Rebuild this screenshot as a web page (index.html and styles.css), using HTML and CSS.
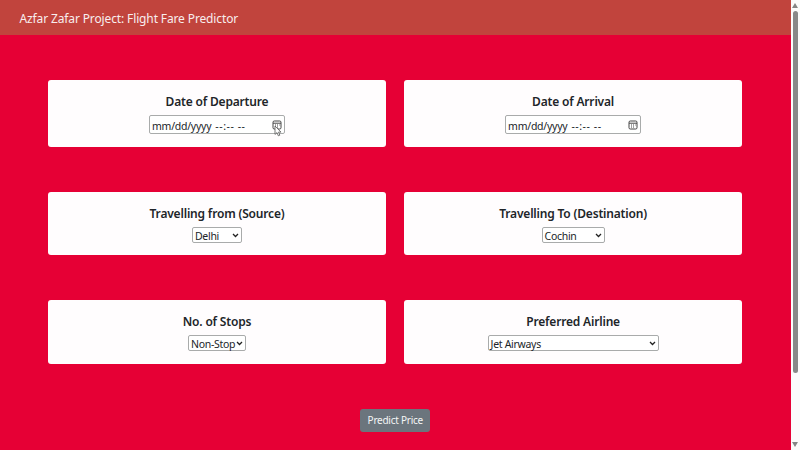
FILE: index.html
```html
<!DOCTYPE html>
<html lang="en">
<head>
<meta charset="utf-8">
<title>Flight Fare Predictor</title>
<link rel="stylesheet" href="styles.css">
</head>
<body>
<div class="page">
  <nav class="navbar"><span class="brand">Azfar Zafar Project: Flight Fare Predictor</span></nav>
  <main class="form">
    <section class="card">
      <h5>Date of Departure</h5>
      <div class="control date"><span class="date-text">mm/dd/yyyy</span><span class="time-text">--:-- --</span>
        <svg class="calendar" viewBox="0 0 10 10"><rect x="1" y="1" width="8" height="8" rx="1.3"/><path d="M1 3.2h8M3 5h1M5 5h1M7 5h.6M3 7h1M5 7h1"/></svg>
        <svg class="cursor" viewBox="0 0 8 12"><path d="M1 1v8.4l2-1.8 1.3 3.2 1.5-.6-1.3-3.1H7z"/></svg>
      </div>
    </section>
    <section class="card">
      <h5>Date of Arrival</h5>
      <div class="control date"><span class="date-text">mm/dd/yyyy</span><span class="time-text">--:-- --</span>
        <svg class="calendar" viewBox="0 0 10 10"><rect x="1" y="1" width="8" height="8" rx="1.3"/><path d="M1 3.2h8M3 5h1M5 5h1M7 5h.6M3 7h1M5 7h1"/></svg>
      </div>
    </section>
    <section class="card">
      <h5>Travelling from (Source)</h5>
      <div class="control select source"><span>Delhi</span><svg class="chevron" viewBox="0 0 7 5"><path d="M1 1l2.5 2.5L6 1"/></svg></div>
    </section>
    <section class="card">
      <h5>Travelling To (Destination)</h5>
      <div class="control select destination"><span>Cochin</span><svg class="chevron" viewBox="0 0 7 5"><path d="M1 1l2.5 2.5L6 1"/></svg></div>
    </section>
    <section class="card">
      <h5>No. of Stops</h5>
      <div class="control select stops"><span>Non-Stop</span><svg class="chevron" viewBox="0 0 7 5"><path d="M1 1l2.5 2.5L6 1"/></svg></div>
    </section>
    <section class="card">
      <h5>Preferred Airline</h5>
      <div class="control select airline"><span>Jet Airways</span><svg class="chevron" viewBox="0 0 7 5"><path d="M1 1l2.5 2.5L6 1"/></svg></div>
    </section>
  </main>
  <button class="submit">Predict Price</button>
</div>
<aside class="scrollbar">
  <svg class="arrow" viewBox="0 0 6 5"><path d="M3 0l3 5H0z"/></svg>
  <div class="thumb"></div>
  <svg class="arrow down" viewBox="0 0 6 5"><path d="M0 0h6L3 5z"/></svg>
</aside>
</body>
</html>
```
FILE: styles.css
```css
* { box-sizing: border-box; }
body {
  margin: 0;
  height: 450px;
  display: flex;
  overflow: hidden;
  background: #e60035;
  color: #212529;
  font: 10.5px "Noto Sans", "Open Sans", sans-serif;
}
.page { flex: 1; display: flex; flex-direction: column; align-items: center; }
.navbar {
  width: 100%;
  height: 35px;
  padding: 0 19.5px;
  background: #c1443d;
  display: flex;
  align-items: center;
}
.brand { color: #f8eeee; font-size: 12px; line-height: 16px; padding-top: 2px; white-space: nowrap; letter-spacing: -0.13px; }
.form {
  width: 694px;
  margin-top: 45px;
  display: grid;
  grid-template-columns: 337.5px 337.5px;
  grid-template-rows: 67px 63.3px 63.3px;
  column-gap: 18.6px;
  row-gap: 45px;
}
.card {
  background: #fffdfe;
  border-radius: 3px;
  padding-top: 14px;
  display: flex;
  flex-direction: column;
  align-items: center;
}
h5 {
  margin: 0 0 5px;
  height: 16px;
  font-size: 12px;
  line-height: 16px;
  font-weight: 600;
  letter-spacing: -0.18px;
  white-space: nowrap;
}
.control {
  position: relative;
  display: flex;
  align-items: center;
  height: 16px;
  padding: 0 2px;
  border: 1px solid #a9abab;
  border-radius: 2px;
  background: #fff;
  white-space: nowrap;
  letter-spacing: -0.3px;
}
.date { width: 136px; height: 19px; }
.date span { padding-top: 2px; }
.date-text { letter-spacing: -0.25px; }
.time-text { margin-left: 4px; letter-spacing: 0.55px; }
.calendar { width: 10px; height: 10px; margin-left: auto; fill: none; stroke: #444; stroke-width: 1; }
.cursor { position: absolute; left: 124px; top: 9px; width: 8px; height: 12px; fill: #fff; stroke: #555; stroke-width: 0.8; }
.select { justify-content: space-between; }
.select span { padding-top: 2px; }
.source { width: 50px; }
.destination { width: 63px; }
.stops { width: 58px; }
.airline { width: 171px; }
.chevron { flex: none; width: 7px; height: 5px; fill: none; stroke: #222; stroke-width: 1.3; }
.submit {
  width: 70px;
  height: 23px;
  margin-top: 45.4px;
  padding: 0;
  border: 0;
  border-radius: 3px;
  background: #6b757d;
  color: #f4f5f6;
  font: inherit;
  font-size: 10px;
  letter-spacing: -0.25px;
  white-space: nowrap;
}
.scrollbar {
  width: 9.5px;
  background: #fbfbfb;
  display: flex;
  flex-direction: column;
  align-items: center;
  padding: 3px 0;
}
.thumb { width: 5px; height: 362px; margin: 3px 0 auto; border-radius: 3px; background: #888; }
.arrow { width: 6px; height: 5px; fill: #858585; }
```
